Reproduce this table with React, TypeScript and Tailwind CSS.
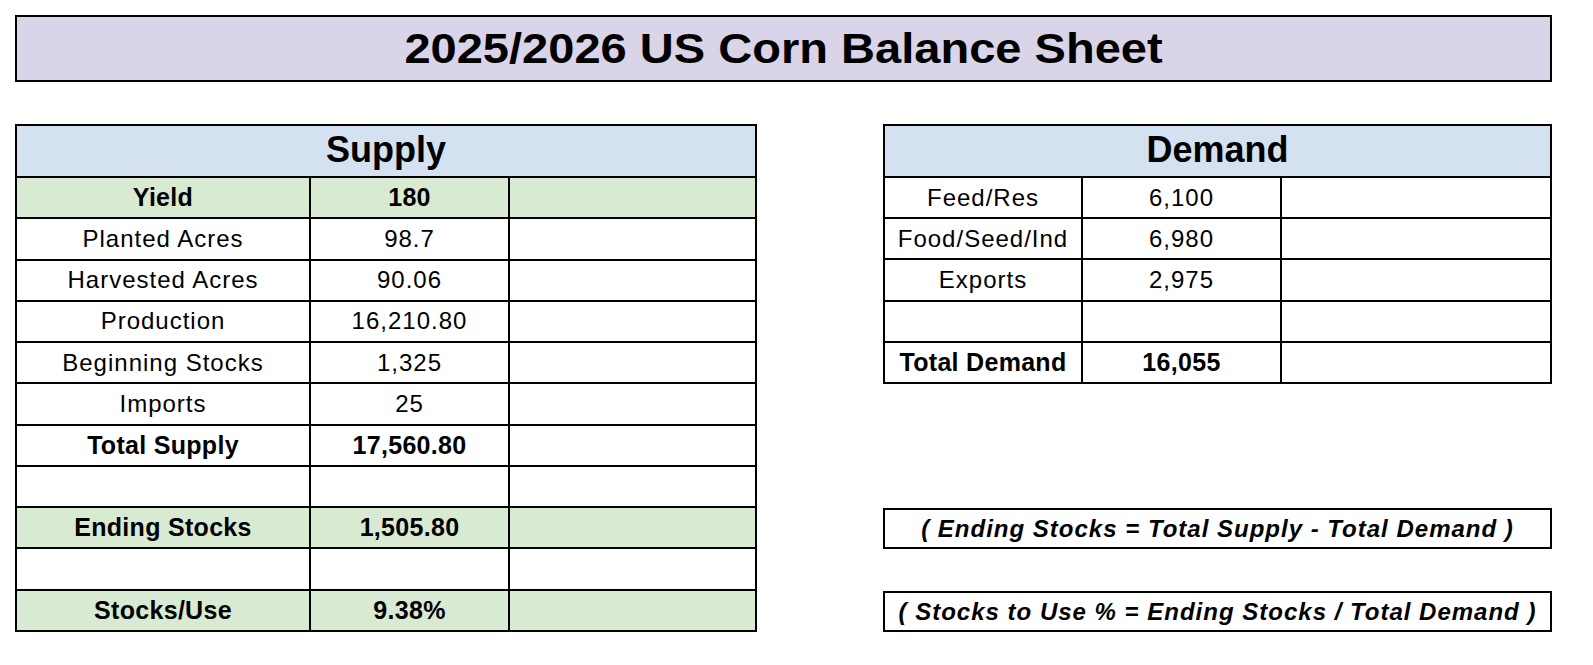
import React from "react";

const FONT = { fontFamily: '"Liberation Sans", Arial, Helvetica, sans-serif' };

type Row = { label: string; value: string; bold?: boolean; green?: boolean };

const supplyRows: Row[] = [
  { label: "Yield", value: "180", bold: true, green: true },
  { label: "Planted Acres", value: "98.7" },
  { label: "Harvested Acres", value: "90.06" },
  { label: "Production", value: "16,210.80" },
  { label: "Beginning Stocks", value: "1,325" },
  { label: "Imports", value: "25" },
  { label: "Total Supply", value: "17,560.80", bold: true },
  { label: "", value: "" },
  { label: "Ending Stocks", value: "1,505.80", bold: true, green: true },
  { label: "", value: "" },
  { label: "Stocks/Use", value: "9.38%", bold: true, green: true },
];

const demandRows: Row[] = [
  { label: "Feed/Res", value: "6,100" },
  { label: "Food/Seed/Ind", value: "6,980" },
  { label: "Exports", value: "2,975" },
  { label: "", value: "" },
  { label: "Total Demand", value: "16,055", bold: true },
];

function Cell({ text, row }: { text: string; row: Row }) {
  const bg = row.green ? "bg-[#d9ead3]" : "bg-white";
  const font = row.bold
    ? "font-bold text-[25px] tracking-[0.3px]"
    : "font-normal text-[24px] tracking-[1px]";
  return (
    <div className={`${bg} flex items-center justify-center text-black leading-none whitespace-nowrap ${font}`}>
      {text}
    </div>
  );
}

function Table({ title, rows, cols, height }: { title: string; rows: Row[]; cols: string; height: string }) {
  return (
    <div className={`grid ${cols} ${height} bg-black p-[2px] gap-[2px]`}>
      <div className="col-span-3 bg-[#d3e1f1] flex items-center justify-center text-[36px] font-bold leading-none text-black pb-[2px]">
        {title}
      </div>
      {rows.map((r, i) => (
        <React.Fragment key={i}>
          <Cell text={r.label} row={r} />
          <Cell text={r.value} row={r} />
          <Cell text="" row={r} />
        </React.Fragment>
      ))}
    </div>
  );
}

function Formula({ text }: { text: string }) {
  return (
    <div className="h-[41px] border-2 border-black bg-white flex items-center justify-center text-[24px] font-bold italic tracking-[1px] leading-none text-black whitespace-nowrap">
      {text}
    </div>
  );
}

export default function App() {
  return (
    <div className="w-[1593px] h-[665px] bg-white pt-[15px] pl-[15px]" style={FONT}>
      <div className="w-[1537px]">
        <div className="h-[67px] border-2 border-black bg-[#d9d4e8] flex items-center justify-center">
          <span className="inline-block text-[42px] font-bold leading-none text-black scale-x-[1.12] whitespace-nowrap">
            2025/2026 US Corn Balance Sheet
          </span>
        </div>
        <div className="mt-[42px] flex justify-between items-start">
          <div className="w-[742px]">
            <Table
              title="Supply"
              rows={supplyRows}
              cols="grid-cols-[292px_197px_245px] grid-rows-[50px_repeat(11,1fr)]"
              height="h-[508px]"
            />
          </div>
          <div className="w-[669px] flex flex-col">
            <Table
              title="Demand"
              rows={demandRows}
              cols="grid-cols-[196px_197px_268px] grid-rows-[50px_repeat(5,1fr)]"
              height="h-[260px]"
            />
            <div className="mt-[124px]">
              <Formula text="( Ending Stocks = Total Supply - Total Demand )" />
            </div>
            <div className="mt-[42px]">
              <Formula text="( Stocks to Use % = Ending Stocks / Total Demand )" />
            </div>
          </div>
        </div>
      </div>
    </div>
  );
}
